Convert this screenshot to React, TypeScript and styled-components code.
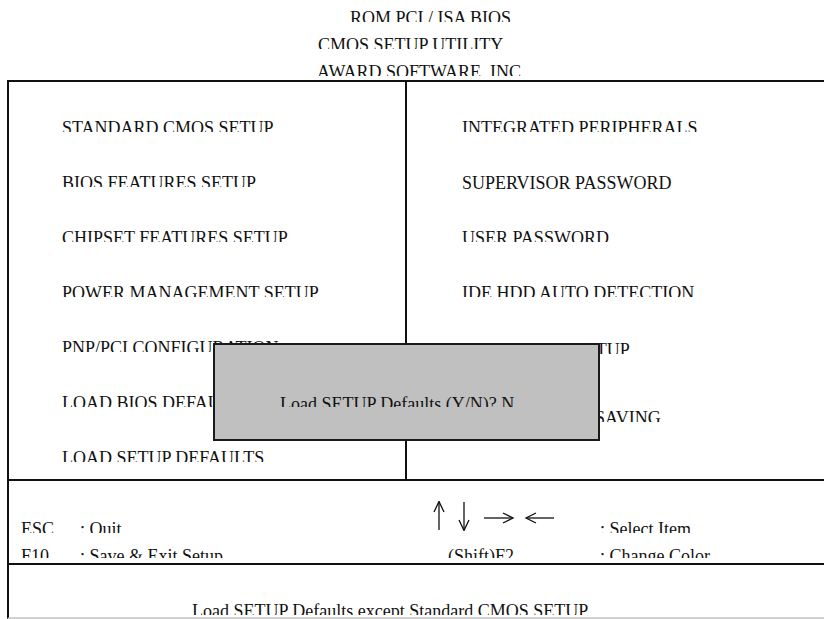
import React from 'react';
import styled, { createGlobalStyle } from 'styled-components';

const GlobalStyle = createGlobalStyle`
  *, *::before, *::after { box-sizing: border-box; }
  html, body {
    margin: 0;
    padding: 0;
    background: #fff;
    overflow: hidden;
  }
  body {
    font-family: "Liberation Serif", "Times New Roman", serif;
    color: #111;
  }
`;

const Screen = styled.div`
  position: relative;
  width: 824px;
  height: 619px;
  overflow: hidden;
  background: #fff;
`;

const Header = styled.header`
  display: flex;
  flex-direction: column;
  gap: 14px;
  height: 80px;
  padding-top: 9px;
`;

// a line of text whose lower part is cut off, as in the captured screen
const Line = styled.div<{ $h?: number; $x?: number; $open?: boolean; $shift?: number }>`
  height: ${(p) => p.$h ?? 13}px;
  overflow: ${(p) => (p.$open ? 'visible' : 'hidden')};
  padding-left: ${(p) => p.$x ?? 0}px;
  margin-top: ${(p) => p.$shift ?? 0}px;
  font-size: 18px;
  line-height: 18px;
  white-space: nowrap;
`;

const Menu = styled.section`
  display: grid;
  grid-template-columns: 398px 1fr;
  width: 840px;
  height: 401px;
  margin-left: 7px;
  border: 2px solid #111;
  border-right: none;
`;

const Column = styled.div<{ $pad: number; $divider?: boolean }>`
  display: flex;
  flex-direction: column;
  gap: 42px;
  padding: 37px 0 0 ${(p) => p.$pad}px;
  border-right: ${(p) => (p.$divider ? '2px solid #111' : 'none')};
`;

const Keys = styled.section`
  display: grid;
  grid-template-columns: 59px 353px 167px 1fr;
  grid-template-rows: 32px 11px;
  row-gap: 14px;
  align-items: end;
  width: 840px;
  height: 84px;
  margin-left: 7px;
  padding: 20px 0 0 12px;
  border-left: 2px solid #111;
  border-bottom: 2px solid #111;
`;

const Arrows = styled.svg`
  align-self: start;
  display: block;
`;

const Help = styled.section`
  width: 840px;
  height: 54px;
  margin-left: 7px;
  padding: 37px 0 0 183px;
  border-left: 2px solid #111;
  border-bottom: 2px solid #d2d2d2;
`;

const Dialog = styled.div`
  position: absolute;
  left: 213px;
  top: 343px;
  width: 387px;
  height: 98px;
  padding: 50px 0 0 65px;
  background: #c0c0c0;
  border: 2px solid #1a1a1a;
`;

const leftItems = [
  'STANDARD CMOS SETUP',
  'BIOS FEATURES SETUP',
  'CHIPSET FEATURES SETUP',
  'POWER MANAGEMENT SETUP',
  'PNP/PCI CONFIGURATION',
  'LOAD BIOS DEFAULTS',
  'LOAD SETUP DEFAULTS',
];

const App: React.FC = () => (
  <Screen>
    <GlobalStyle />
    <Header>
      <Line $x={350}>ROM PCI / ISA BIOS</Line>
      <Line $x={318}>CMOS SETUP UTILITY</Line>
      <Line $x={317}>AWARD SOFTWARE, INC</Line>
    </Header>

    <Menu>
      <Column $pad={53} $divider>
        {leftItems.map((item) => (
          <Line key={item}>{item}</Line>
        ))}
      </Column>
      <Column $pad={55}>
        <Line>INTEGRATED PERIPHERALS</Line>
        <Line $open>SUPERVISOR PASSWORD</Line>
        <Line>USER PASSWORD</Line>
        <Line>IDE HDD AUTO DETECTION</Line>
        <Line $shift={2}>SAVE &amp; EXIT SETUP</Line>
        <Line $shift={13}>EXIT WITHOUT SAVING</Line>
      </Column>
    </Menu>

    <Keys>
      <Line>ESC</Line>
      <Line>: Quit</Line>
      <Arrows width="124" height="30" viewBox="0 0 124 30" fill="none" stroke="#111" strokeWidth="1.3">
        <line x1="6" y1="0.5" x2="6" y2="29" />
        <polyline points="1,11 6,0.5 11,11" />
        <line x1="31" y1="1" x2="31" y2="29.5" />
        <polyline points="26,19 31,29.5 36,19" />
        <line x1="51" y1="17" x2="80" y2="17" />
        <polyline points="70,12 80,17 70,22" />
        <line x1="93" y1="17" x2="121" y2="17" />
        <polyline points="103,12 93,17 103,22" />
      </Arrows>
      <Line>: Select Item</Line>
      <Line $h={11}>F10</Line>
      <Line $h={11}>: Save &amp; Exit Setup</Line>
      <Line $h={11} $x={15}>(Shift)F2</Line>
      <Line $h={11}>: Change Color</Line>
    </Keys>

    <Help>
      <Line>Load SETUP Defaults except Standard CMOS SETUP</Line>
    </Help>

    <Dialog>
      <Line $h={12}>Load SETUP Defaults (Y/N)? N</Line>
    </Dialog>
  </Screen>
);

export default App;
